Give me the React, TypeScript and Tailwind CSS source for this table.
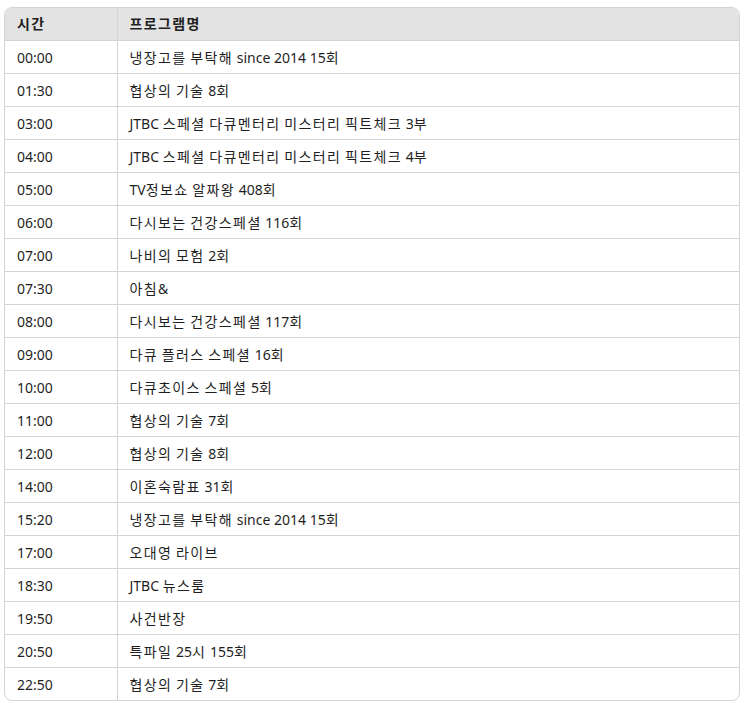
import React from "react";

const rows: [string, string][] = [
  ["00:00", "냉장고를 부탁해 since 2014 15회"],
  ["01:30", "협상의 기술 8회"],
  ["03:00", "JTBC 스페셜 다큐멘터리 미스터리 픽트체크 3부"],
  ["04:00", "JTBC 스페셜 다큐멘터리 미스터리 픽트체크 4부"],
  ["05:00", "TV정보쇼 알짜왕 408회"],
  ["06:00", "다시보는 건강스페셜 116회"],
  ["07:00", "나비의 모험 2회"],
  ["07:30", "아침&"],
  ["08:00", "다시보는 건강스페셜 117회"],
  ["09:00", "다큐 플러스 스페셜 16회"],
  ["10:00", "다큐초이스 스페셜 5회"],
  ["11:00", "협상의 기술 7회"],
  ["12:00", "협상의 기술 8회"],
  ["14:00", "이혼숙람표 31회"],
  ["15:20", "냉장고를 부탁해 since 2014 15회"],
  ["17:00", "오대영 라이브"],
  ["18:30", "JTBC 뉴스룸"],
  ["19:50", "사건반장"],
  ["20:50", "특파일 25시 155회"],
  ["22:50", "협상의 기술 7회"],
];

function K({ text }: { text: string }) {
  const parts = text.split(/([\uAC00-\uD7A3]+)/);
  return (
    <>
      {parts.map((p, i) =>
        /[\uAC00-\uD7A3]/.test(p) ? (
          <span key={i} className="tracking-[1.4px]">
            {p}
          </span>
        ) : (
          <span key={i}>{p}</span>
        )
      )}
    </>
  );
}

export default function App() {
  return (
    <div className="bg-white min-h-[703px] pt-[7px] pl-[4px] font-['Segoe_UI','Noto_Sans','Noto_Sans_CJK_KR',sans-serif] text-[14px] text-[#1f1f1f]">
      <div className="w-[736px] border border-[#d4d4d4] rounded-lg overflow-hidden">
        <table className="w-full border-collapse">
          <thead>
            <tr className="bg-[#e3e3e3] h-[32px]">
              <th className="w-[112px] text-left font-bold px-3 pb-[1px] border-r border-[#d4d4d4]">
                <K text="시간" />
              </th>
              <th className="text-left font-bold px-3 pb-[1px]">
                <K text="프로그램명" />
              </th>
            </tr>
          </thead>
          <tbody>
            {rows.map(([t, p], i) => (
              <tr key={i} className="h-[33px] border-t border-[#d4d4d4]">
                <td className="px-3 pt-[2px] border-r border-[#d4d4d4]">{t}</td>
                <td className="px-3 pt-[2px]">
                  <K text={p} />
                </td>
              </tr>
            ))}
          </tbody>
        </table>
      </div>
    </div>
  );
}
